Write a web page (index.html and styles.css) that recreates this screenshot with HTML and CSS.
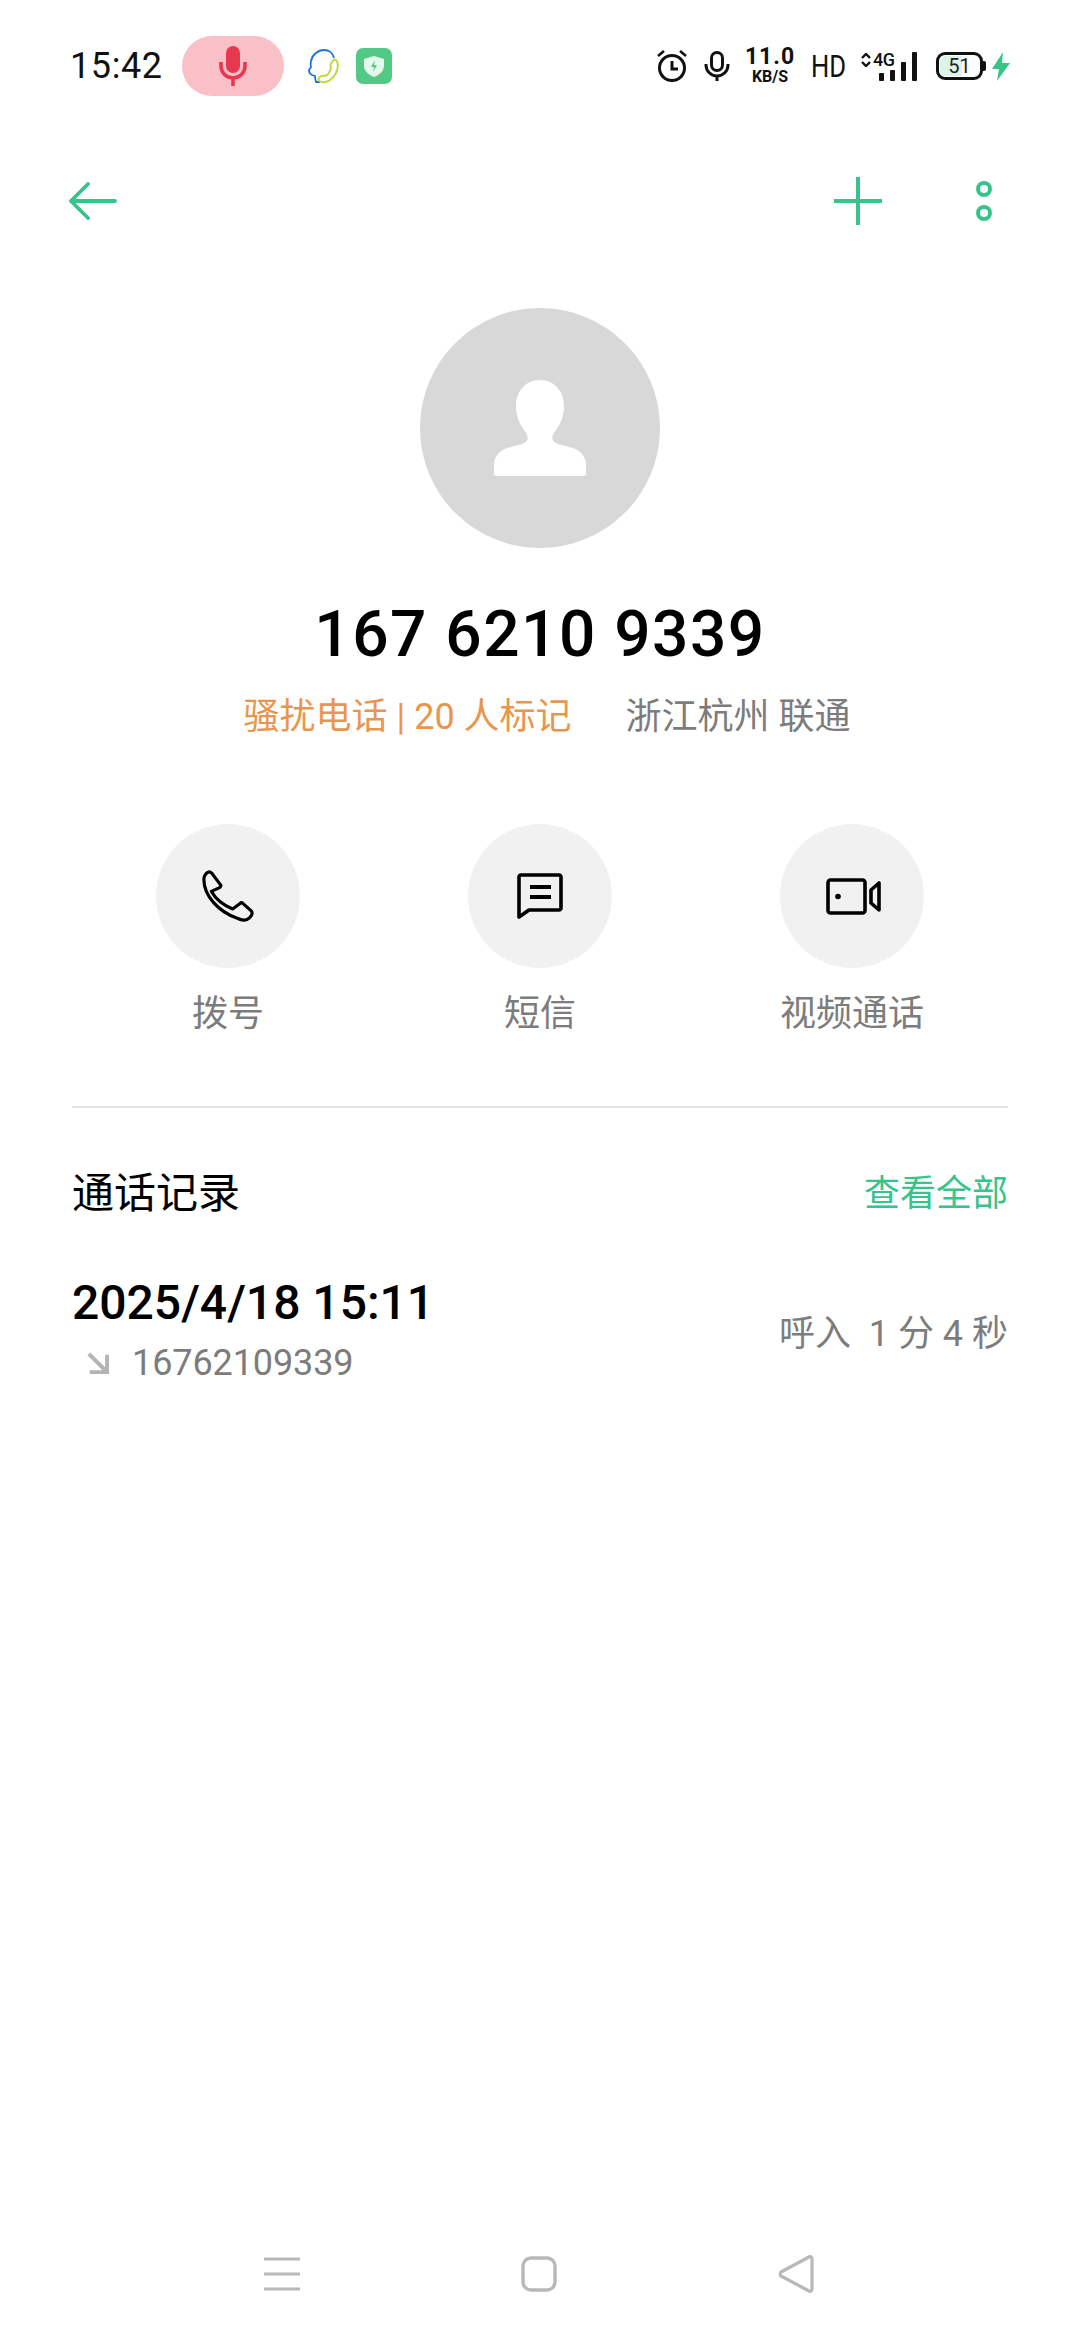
FILE: index.html
```html
<!DOCTYPE html>
<html lang="zh-CN">
<head>
  <meta charset="UTF-8" />
  <title>167 6210 9339</title>
  <link rel="stylesheet" href="styles.css">
</head>
<body>
  <div class="phone">

    <!-- status bar -->
    <div class="status-bar">
      <div class="status-left">
        <span class="clock">15:42</span>
        <span class="mic-pill">
          <svg width="30" height="40" viewBox="0 0 30 40"><rect x="8" y="0" width="14" height="27" rx="7" fill="#e8384f"/><path d="M3 16v4a12 12 0 0 0 24 0v-4M15 32v8" fill="none" stroke="#e8384f" stroke-width="3.6"/></svg>
        </span>
        <svg class="app-head" width="32" height="36" viewBox="0 0 32 36"><path d="M13 34H9c-1-3-1-5-1-6l-3-1c-2-1-3-3-3-5l2-3c-1-2 0-5 0-6 1-6 7-11 13-11 5 0 9 3 10 8" fill="none" stroke="#1b74d8" stroke-width="1.8" stroke-linejoin="round"/><path d="M29 12c3 3 2 9 0 13-3 6-9 10-14 9-3 0-4-2-3-4 1-2 4-3 6-2 3-1 5-4 6-8-1-2-1-4 1-6 1-2 3-3 4-2z" fill="none" stroke="#c3d648" stroke-width="2"/></svg>
        <svg class="app-shield" width="36" height="36" viewBox="0 0 36 36"><rect width="36" height="36" rx="7" fill="#52ca85"/><path d="M18 8l10 3v7c0 5-5 9-10 11-5-2-10-6-10-11v-7z" fill="#e6f8ee"/><path d="M19 12l-4 7h3l-1 5 4-7h-3z" fill="#52ca85"/></svg>
      </div>
      <div class="status-right">
        <svg width="32" height="32" viewBox="0 0 32 32"><circle cx="16" cy="18" r="12.5" fill="none" stroke="#111" stroke-width="3"/><path d="M16 11v8h6" fill="none" stroke="#111" stroke-width="3"/><path d="M2 6l6-5M30 6l-6-5" stroke="#111" stroke-width="2.6"/></svg>
        <svg class="mic-small" width="26" height="30" viewBox="0 0 26 30"><rect x="7.5" y="1.5" width="11" height="18" rx="5.5" fill="none" stroke="#111" stroke-width="3"/><path d="M2 13v1a11 11 0 0 0 22 0v-1M13 25v5" fill="none" stroke="#111" stroke-width="3"/></svg>
        <span class="speed"><b>11.0</b><i>KB/S</i></span>
        <span class="hd">HD</span>
        <span class="signal">
          <svg class="arrows" width="10" height="14" viewBox="0 0 10 14"><path d="M1 5l4-4 4 4M1 9l4 4 4-4" fill="none" stroke="#111" stroke-width="2.4"/></svg>
          <span class="net">4G</span>
          <span class="bars"><i class="b1"></i><i class="b2"></i><i class="b3"></i><i class="b4"></i></span>
        </span>
        <span class="battery"><span class="battery-fill"></span><span class="battery-num">51</span></span>
        <svg class="bolt" width="18" height="29" viewBox="0 0 18 29"><path d="M11 0L0 17h7L5 29 18 11h-8z" fill="#36c585"/></svg>
      </div>
    </div>

    <!-- action bar -->
    <div class="action-bar">
      <svg width="50" height="38" viewBox="0 0 50 38"><path d="M47 19H3M20 2L3 19l17 17" fill="none" stroke="#36c48a" stroke-width="3.8" stroke-linecap="round" stroke-linejoin="round"/></svg>
      <div class="action-right">
        <svg width="48" height="48" viewBox="0 0 48 48"><path d="M24 0v48M0 24h48" stroke="#36c48a" stroke-width="4"/></svg>
        <svg width="16" height="40" viewBox="0 0 16 40"><circle cx="8" cy="8" r="6" fill="none" stroke="#36c48a" stroke-width="4"/><circle cx="8" cy="32" r="6" fill="none" stroke="#36c48a" stroke-width="4"/></svg>
      </div>
    </div>

    <!-- contact -->
    <div class="contact">
      <div class="avatar">
        <svg width="94" height="98" viewBox="0 0 94 98"><path d="M47 1c14 0 24 11 24 26 0 12-5 20-10 27-3 5-2 9 4 11l15 4c8 3 13 9 13 17v8c0 2-1 3-3 3H4c-2 0-3-1-3-3v-8c0-8 5-14 13-17l15-4c6-2 7-6 4-11-5-7-10-15-10-27C23 12 33 1 47 1z" fill="#fff"/></svg>
      </div>
      <div class="number">167 6210 9339</div>
      <div class="meta">
        <span class="spam">骚扰电话 | 20 人标记</span>
        <span class="place">浙江杭州 联通</span>
      </div>
    </div>

    <!-- call / sms / video -->
    <div class="quick-actions">
      <div class="quick-item">
        <div class="quick-icon">
          <svg width="52" height="52" viewBox="0 0 56 56"><path d="M2 10C2 6 5 2 8 2c1 0 2 1 3 2l9 12c1 1 0 2-1 3l-9 4c5 9 13 15 23 19l8-6c1-1 2-1 3 0l9 8c1 1 1 2 1 3-1 4-5 7-9 7-2 0-5-1-7-2C18 45 2 28 2 10z" fill="none" stroke="#000" stroke-width="3.4" stroke-linejoin="round"/></svg>
        </div>
        <span>拨号</span>
      </div>
      <div class="quick-item">
        <div class="quick-icon">
          <svg width="46" height="46" viewBox="0 0 46 46"><path d="M2 4c0-1 1-2 2-2h38c1 0 2 1 2 2v31c0 1-1 2-2 2H12L2 44z" fill="none" stroke="#000" stroke-width="3.6" stroke-linejoin="round"/><path d="M13 14h21M13 24h21" stroke="#000" stroke-width="4"/></svg>
        </div>
        <span>短信</span>
      </div>
      <div class="quick-item">
        <div class="quick-icon video-icon">
          <svg width="56" height="37" viewBox="0 0 56 37"><rect x="2" y="2" width="37" height="33" rx="2.5" fill="none" stroke="#000" stroke-width="3.6"/><circle cx="12" cy="18.5" r="2.8"/><path d="M53 5v27l-8-7V12z" fill="none" stroke="#000" stroke-width="3.6" stroke-linejoin="round"/></svg>
        </div>
        <span>视频通话</span>
      </div>
    </div>

    <div class="divider"></div>

    <!-- call log -->
    <div class="log-head">
      <span class="log-title">通话记录</span>
      <span class="log-all">查看全部</span>
    </div>
    <div class="log-row">
      <div class="log-left">
        <div class="log-date">2025/4/18 15:11</div>
        <div class="log-sub">
          <svg width="22" height="22" viewBox="0 0 24 24"><path d="M2 2l19 19M22 3v19H3" fill="none" stroke="#b4b4b4" stroke-width="4.4"/></svg>
          <span>16762109339</span>
        </div>
      </div>
      <div class="log-right">呼入&nbsp; 1 分 4 秒</div>
    </div>

    <!-- nav bar -->
    <div class="nav-bar">
      <svg width="36" height="34" viewBox="0 0 36 34"><path d="M0 2h36M0 17h36M0 32h36" stroke="#b8b8b8" stroke-width="3"/></svg>
      <svg width="36" height="36" viewBox="0 0 36 36"><rect x="2" y="2" width="32" height="32" rx="8" fill="none" stroke="#b8b8b8" stroke-width="3.4"/></svg>
      <svg width="36" height="38" viewBox="0 0 36 38"><path d="M34 4c0-2-2-3-3-2L3 17c-1 1-1 3 0 4l28 15c1 1 3 0 3-2z" fill="none" stroke="#b8b8b8" stroke-width="3.2" stroke-linejoin="round"/></svg>
    </div>
  </div>
</body>
</html>
```

FILE: styles.css
```css
* {
  box-sizing: border-box;
}

body {
  margin: 0;
  background-color: #fff;
  font-family: Roboto, "Noto Sans CJK SC", sans-serif;
}

.phone {
  width: 1080px;
  height: 2340px;
  display: flex;
  flex-direction: column;
  background-color: #fff;
  overflow: hidden;
}

/* status bar */
.status-bar {
  height: 60px;
  margin-top: 36px;
  padding: 0 70px;
  display: flex;
  justify-content: space-between;
  align-items: center;
}

.status-left,
.status-right {
  display: flex;
  align-items: center;
}

.clock {
  width: 92px;
  font-size: 36px;
  letter-spacing: 0.6px;
  color: #111;
  white-space: nowrap;
}

.mic-pill {
  width: 102px;
  height: 60px;
  margin-left: 20px;
  border-radius: 30px;
  background-color: #f9c0c7;
  display: flex;
  justify-content: center;
  align-items: center;
}

.app-head {
  margin-left: 23px;
}

.app-shield {
  margin-left: 17px;
}

.mic-small {
  margin-left: 16px;
}

.speed {
  width: 46px;
  margin-left: 17px;
  display: flex;
  flex-direction: column;
  align-items: center;
  gap: 3px;
  color: #111;
}

.speed b {
  font-size: 23px;
  line-height: 18px;
  letter-spacing: 1px;
  white-space: nowrap;
}

.speed i {
  font-style: normal;
  font-weight: 700;
  font-size: 16px;
  line-height: 16px;
  white-space: nowrap;
}

.hd {
  width: 35px;
  margin-left: 18px;
  font-size: 32px;
  color: #111;
  transform: scaleX(0.8);
  transform-origin: left center;
  white-space: nowrap;
}

.signal {
  margin-left: 15px;
  width: 56px;
  height: 29px;
  position: relative;
  display: block;
}

.arrows {
  position: absolute;
  left: 0;
  top: 1px;
}

.net {
  position: absolute;
  left: 12px;
  top: 0;
  font-size: 18px;
  font-weight: 500;
  line-height: 15px;
  letter-spacing: -0.5px;
  color: #111;
}

.bars {
  position: absolute;
  right: 0;
  bottom: 0;
  display: flex;
  align-items: flex-end;
  gap: 6px;
}

.bars i {
  width: 5px;
  background-color: #111;
  border-radius: 1px;
}

.b1 { height: 8px; }
.b2 { height: 11px; }
.b3 { height: 19px; }
.b4 { height: 29px; }

.battery {
  margin-left: 19px;
  margin-right: 3px;
  width: 47px;
  height: 28px;
  border: 3px solid #111;
  border-radius: 9px;
  position: relative;
  display: flex;
  justify-content: center;
  align-items: center;
}

.battery::after {
  content: "";
  position: absolute;
  right: -6px;
  top: 6px;
  width: 3px;
  height: 10px;
  background-color: #111;
  border-radius: 0 2px 2px 0;
}

.battery-fill {
  position: absolute;
  left: 1px;
  top: 1px;
  bottom: 1px;
  width: 22px;
  border-radius: 5px 0 0 5px;
  background-color: #dcf3e8;
}

.battery-num {
  position: relative;
  font-size: 20px;
  color: #222;
}

.bolt {
  margin-left: 6px;
}

/* action bar */
.action-bar {
  height: 48px;
  margin-top: 81px;
  padding: 0 88px 0 68px;
  display: flex;
  justify-content: space-between;
  align-items: center;
}

.action-right {
  display: flex;
  align-items: center;
  gap: 94px;
}

/* contact */
.contact {
  margin-top: 83px;
  display: flex;
  flex-direction: column;
  align-items: center;
}

.avatar {
  width: 240px;
  height: 240px;
  border-radius: 50%;
  background-color: #d8d8d8;
  display: flex;
  justify-content: center;
  align-items: center;
}

.number {
  margin-top: 50px;
  font-size: 64px;
  line-height: 74px;
  font-weight: 500;
  letter-spacing: 1.5px;
  color: #000;
}

.meta {
  margin-top: 21px;
  padding-left: 14px;
  font-size: 36px;
  line-height: 48px;
  display: flex;
  gap: 54px;
}

.spam {
  color: #e8964e;
}

.place {
  color: #7c7c7c;
}

/* quick actions */
.quick-actions {
  margin-top: 83px;
  padding: 0 156px;
  display: flex;
  justify-content: space-between;
}

.quick-item {
  width: 144px;
  display: flex;
  flex-direction: column;
  align-items: center;
  font-size: 36px;
  line-height: 48px;
  color: #7c7c7c;
  white-space: nowrap;
}

.quick-icon {
  width: 144px;
  height: 144px;
  border-radius: 50%;
  background-color: #f1f1f1;
  margin-bottom: 22px;
  display: flex;
  justify-content: center;
  align-items: center;
}

.video-icon svg {
  margin-left: 3px;
}

.divider {
  height: 2px;
  margin: 68px 72px 0;
  background-color: #e4e4e4;
}

/* call log */
.log-head {
  margin-top: 58px;
  padding: 0 72px;
  display: flex;
  justify-content: space-between;
  align-items: center;
  line-height: 56px;
}

.log-title {
  font-size: 42px;
  color: #000;
}

.log-all {
  font-size: 36px;
  color: #36c48a;
}

.log-row {
  margin-top: 53px;
  padding: 0 72px;
  display: flex;
  justify-content: space-between;
  align-items: center;
}

.log-date {
  font-size: 48px;
  line-height: 56px;
  font-weight: 500;
  color: #000;
}

.log-sub {
  margin-top: 10px;
  padding-left: 15px;
  display: flex;
  align-items: center;
  gap: 23px;
  font-size: 36px;
  line-height: 44px;
  letter-spacing: -0.1px;
  color: #7c7c7c;
}

.log-right {
  font-size: 36px;
  color: #7c7c7c;
}

/* nav bar */
.nav-bar {
  margin-top: auto;
  margin-bottom: 47px;
  padding: 0 266px 0 264px;
  display: flex;
  justify-content: space-between;
  align-items: center;
}
```
